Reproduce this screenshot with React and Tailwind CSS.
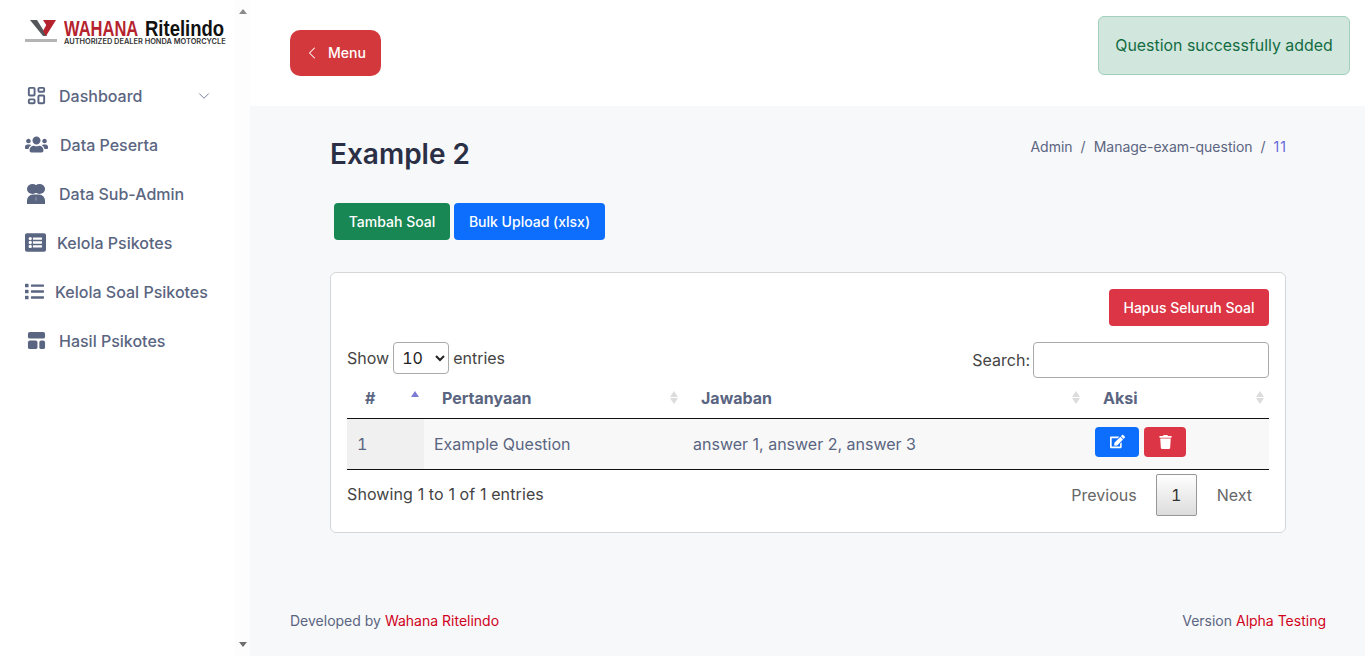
import { ChevronDown, ChevronLeft } from "lucide-react";
import { FaUsers, FaListAlt, FaList, FaEdit, FaTrash } from "react-icons/fa";
import { TbLayoutDashboard } from "react-icons/tb";

const LayoutIcon = ({ className }) => (
  <svg viewBox="0 0 20 20" className={className} fill="currentColor">
    <rect x="1" y="1" width="18" height="7" rx="2" />
    <rect x="1" y="10" width="10" height="9" rx="2" />
    <rect x="13" y="10" width="6" height="9" rx="2" />
  </svg>
);

// two heads over one wide body, no matching icon in the packages
const SubAdminIcon = ({ className }) => (
  <svg viewBox="0 0 18 20" className={className} fill="currentColor">
    <ellipse cx="5.500" cy="5" rx="5.500" ry="5" />
    <ellipse cx="12.500" cy="5" rx="5.500" ry="5" />
    <path d="M0 20v-3.500a6 6 0 0 1 6-6h6a6 6 0 0 1 6 6V20z" />
    <path d="M8.500 12.500h1l.4 3.500-.9 1-.9-1z" fill="#7d87a0" />
  </svg>
);

const Logo = () => (
  <div className="flex items-start h-[30px] ml-[25px] mt-[19px]">
    <div className="w-[33px] flex flex-col items-center mt-px">
      <svg viewBox="0 0 27 16" className="w-[27px] h-[16px] ml-[2px]">
        <polygon points="1,0 8,0 18,16 14,16" fill="#55565a" />
        <polygon points="20,0 27,0 17,16 14,11" fill="#b5232e" />
        <polygon points="14,0 20,0 22.500,4 19.500,8.500" fill="#b5232e" />
      </svg>
      <div className="h-[3px] w-[32px] mt-[3px] bg-[#b4b4b4]" />
    </div>
    <div className="ml-[7px]">
      <div className="flex h-[19px] items-center font-['Liberation_Sans',sans-serif] text-[22px] font-bold leading-none whitespace-nowrap">
        <span className="inline-block w-[81px] shrink-0 origin-left scale-x-[0.75] text-[#b5232e]">WAHANA</span>
        <span className="inline-block shrink-0 origin-left scale-x-[0.84] text-[#111]">Ritelindo</span>
      </div>
      <div className="text-[7.400px] font-semibold leading-[7px] text-[#333] whitespace-nowrap">
        AUTHORIZED DEALER HONDA MOTORCYCLE
      </div>
    </div>
  </div>
);

const menuItems = [
  { label: "Dashboard", Icon: TbLayoutDashboard, iconClass: "w-[23px] h-[23px] ml-[25px]", gap: "ml-[11px]", caret: true },
  { label: "Data Peserta", Icon: FaUsers, iconClass: "w-[23px] h-[23px] ml-[25px]", gap: "ml-[12px]" },
  { label: "Data Sub-Admin", Icon: SubAdminIcon, iconClass: "w-[18px] h-[20px] ml-[27px]", gap: "ml-[14px]" },
  { label: "Kelola Psikotes", Icon: FaListAlt, iconClass: "w-[21px] h-[21px] ml-[25px]", gap: "ml-[11px]" },
  { label: "Kelola Soal Psikotes", Icon: FaList, iconClass: "w-[19px] h-[19px] ml-[25px]", gap: "ml-[11px]" },
  { label: "Hasil Psikotes", Icon: LayoutIcon, iconClass: "w-[19px] h-[19px] ml-[27px]", gap: "ml-[13px]" },
];

const Sidebar = () => (
  <aside className="w-[250px] h-[656px] shrink-0 flex bg-white">
    <div className="w-[235px] shrink-0">
      <Logo />
      <nav className="mt-[22px] flex flex-col">
        {menuItems.map(({ label, Icon, iconClass, gap, caret }) => (
          <div key={label} className="h-[49px] flex items-center text-[#5a6581] text-[16px] font-medium">
            <Icon className={iconClass} />
            <span className={gap}>{label}</span>
            {caret && <ChevronDown className="w-[18px] h-[18px] ml-auto mr-[22px] text-[#6b7690]" strokeWidth={1.25} />}
          </div>
        ))}
      </nav>
    </div>
    <div className="w-[15px] flex flex-col justify-between items-center bg-[#fdfdfd] py-[9px]">
      <div className="w-0 h-0 border-x-[4px] border-x-transparent border-b-[5px] border-b-[#8a8a8a]" />
      <div className="w-0 h-0 border-x-[4px] border-x-transparent border-t-[5px] border-t-[#707070]" />
    </div>
  </aside>
);

const SortArrows = ({ active }) => (
  <span className="flex flex-col gap-[1px] ml-auto">
    <span className={`w-0 h-0 border-x-[4.500px] border-x-transparent border-b-[6px] ${active ? "border-b-[#7c7cd6]" : "border-b-[#dcdcdc]"}`} />
    <span className={`w-0 h-0 border-x-[4.500px] border-x-transparent border-t-[6px] ${active ? "border-t-transparent" : "border-t-[#dcdcdc]"}`} />
  </span>
);

const columns = [
  { label: "#", width: "w-[77px]", pad: "pl-[18px] pr-[5px]", active: true },
  { label: "Pertanyaan", width: "w-[259px]", pad: "pl-[18px] pr-[5px]" },
  { label: "Jawaban", width: "w-[402px]", pad: "pl-[18px] pr-[5px]" },
  { label: "Aksi", width: "flex-1", pad: "pl-[18px] pr-[5px]" },
];

const DataTable = () => (
  <div>
    <div className="flex items-center h-[40px] -mt-[3px]">
      <div className="flex items-center text-[#444] -mt-[5px]">
        <span>Show</span>
        <select className="mx-[4px] w-[56px] h-[32px] px-[4px] border border-[#aaa] rounded-[4px] bg-white text-[#222] tabular-nums">
          <option>10</option>
        </select>
        <span>entries</span>
      </div>
      <div className="ml-auto flex items-center text-[#444]">
        <span className="mr-[3px]">Search:</span>
        <input className="w-[236px] h-[36px] border border-[#aaa] rounded-[4px] bg-white" />
      </div>
    </div>
    <div className="flex h-[40px] -mt-[1px] pb-[2px] items-center border-b border-[#111] font-bold text-[#5a6581]">
      {columns.map((c) => (
        <div key={c.label} className={`${c.width} ${c.pad} flex items-center`}>
          <span>{c.label}</span>
          <SortArrows active={c.active} />
        </div>
      ))}
    </div>
    <div className="flex h-[51px] items-center border-b border-[#111] bg-[#f8f8f8] text-[#5a6581]">
      <div className="w-[77px] h-full flex items-center pl-[10px] bg-[#f0f0f0] tabular-nums">1</div>
      <div className="w-[259px] pl-[10px]">Example Question</div>
      <div className="w-[402px] pl-[10px]">answer 1, answer 2, answer 3</div>
      <div className="flex-1 flex gap-[5px] pl-[10px] -mt-[5px]">
        <button className="w-[44px] h-[30px] flex items-center justify-center rounded-[4px] bg-[#0d6efd] text-white">
          <FaEdit className="w-[15px] h-[15px]" />
        </button>
        <button className="w-[42px] h-[30px] flex items-center justify-center rounded-[4px] bg-[#dc3545] text-white">
          <FaTrash className="w-[13px] h-[14px]" />
        </button>
      </div>
    </div>
    <div className="flex items-center mt-[4px] h-[42px]">
      <span className="text-[#444] tracking-[0.11px] -mt-[2px]">Showing 1 to 1 of 1 entries</span>
      <div className="ml-auto flex items-center text-[#666] mr-[17px]">
        <span className="mr-[19px]">Previous</span>
        <span className="w-[41px] h-[42px] flex items-center justify-center border border-[#979797] rounded-[2px] text-[#333] bg-gradient-to-b from-white to-[#dcdcdc] tabular-nums">1</span>
        <span className="ml-[20px]">Next</span>
      </div>
    </div>
  </div>
);

export default function App() {
  return (
    <div className="flex h-[656px] overflow-hidden font-['Inter',sans-serif] text-[16px] bg-[#f7f8fa]">
      <Sidebar />
      <main className="flex-1 flex flex-col min-w-0">
        <header className="h-[106px] shrink-0 bg-white flex items-start justify-between pl-[40px] pr-[15px]">
          <button className="mt-[30px] w-[91px] h-[46px] flex items-center pl-[12px] pb-[1px] rounded-[10px] bg-[#d3393c] text-white text-[14px] font-medium">
            <ChevronLeft className="w-[20px] h-[20px] mr-[6px]" strokeWidth={1.25} />
            Menu
          </button>
          <div className="mt-[16px] w-[252px] h-[59px] flex items-center justify-center border border-[#a3cfbb] rounded-[6px] bg-[#d1e7dd] text-[#146c43] text-[15.900px]">
            Question successfully added
          </div>
        </header>

        <div className="flex-1 flex flex-col pl-[80px] pr-[79px]">
          <div className="flex items-start justify-between pt-[29px] h-[97px]">
            <h1 className="text-[28px] leading-[38px] font-semibold text-[#2a2f45]">Example 2</h1>
            <div className="mt-[3px] text-[14px] leading-[18px] text-[#5a6581] flex gap-[8px]">
              <span>Admin</span>
              <span>/</span>
              <span>Manage-exam-question</span>
              <span>/</span>
              <span className="text-[#6469d8] tracking-[1px] -mr-[1px]">11</span>
            </div>
          </div>

          <div className="flex gap-[4px] pl-[4px]">
            <button className="w-[116px] h-[37px] rounded-[4px] bg-[#198754] text-white text-[14px] font-medium">Tambah Soal</button>
            <button className="w-[151px] h-[37px] rounded-[4px] bg-[#0d6efd] text-white text-[14px] font-medium">Bulk Upload (xlsx)</button>
          </div>

          <section className="mt-[32px] h-[261px] border border-[#d4d6da] rounded-[6px] bg-white px-[16px] pt-[16px]">
            <div className="flex justify-end">
              <button className="w-[160px] h-[37px] rounded-[4px] bg-[#dc3545] text-white text-[14px] font-medium">Hapus Seluruh Soal</button>
            </div>
            <div className="mt-[17px]">
              <DataTable />
            </div>
          </section>
        </div>

        <footer className="h-[70px] shrink-0 flex justify-between pl-[40px] pr-[39px] pt-[24px] text-[14px] text-[#5a6581]">
          <span>Developed by <span className="text-[#d0021b]">Wahana Ritelindo</span></span>
          <span>Version <span className="text-[#d0021b]">Alpha Testing</span></span>
        </footer>
      </main>
    </div>
  );
}
